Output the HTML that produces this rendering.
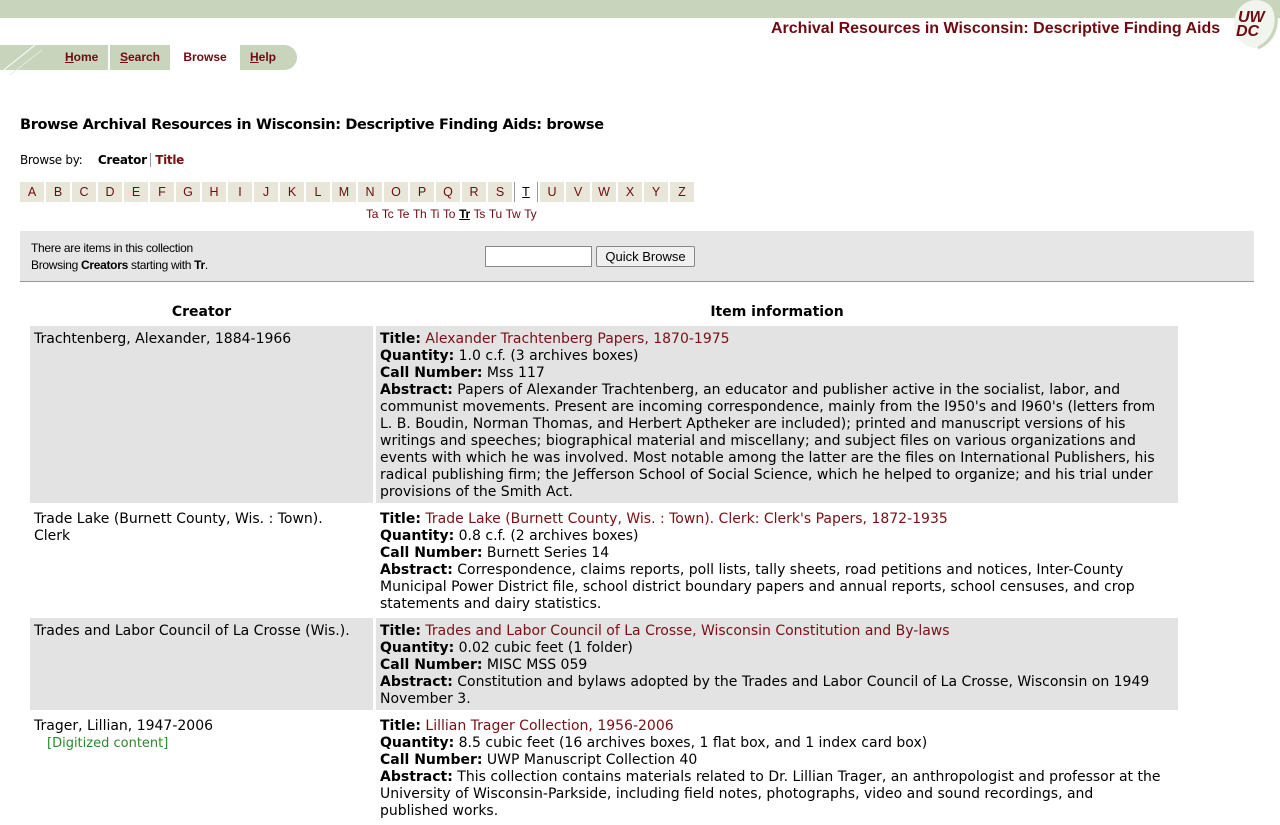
<!DOCTYPE html>
<html><head><meta charset="utf-8"><style>
body{margin:0;background:#fff;font-family:"DejaVu Sans",Verdana,sans-serif;color:#000;width:1280px;height:800px;overflow:hidden;position:relative}
a{color:#7a0f14;text-decoration:none}
.band{position:absolute;left:0;top:0;width:1280px;height:18px;background:#c8d4bc}
.sitetitle{position:absolute;left:771px;top:20px;font:bold 16px "Liberation Sans",Arial,sans-serif;color:#6e0a10}
.logo{position:absolute;left:1226px;top:0px;width:54px;height:50px}
.tabs{position:absolute;left:0;top:45px;height:25px;font:bold 12px "Liberation Sans",Arial,sans-serif}
.tab{position:absolute;top:0;height:25px;line-height:24px;background:#c8d4bc;color:#6e0a10;text-align:center}
.tab u{text-decoration:underline}
h1{position:absolute;left:20px;top:117px;margin:0;font:bold 14.5px "DejaVu Sans",sans-serif;letter-spacing:-0.35px}
.by{position:absolute;left:20px;top:153px;font-size:12px;letter-spacing:-0.3px}
.by b{margin-left:12px}
.letters{position:absolute;left:20px;top:182px;height:20px}
.letters span{position:absolute;top:0;width:24px;height:17px;padding-top:3px;line-height:17px;text-align:center;background:#e8e6d8;color:#6e0a10;font:12.5px "Liberation Sans",Arial,sans-serif}
.letters span.cur{background:#fff;border-left:1px solid #999;border-right:1px solid #999;color:#000;text-decoration:underline;width:22px}
.sub{position:absolute;left:366px;top:207px;font:12px "Liberation Sans",Arial,sans-serif;color:#6e0a10;letter-spacing:-0.3px;word-spacing:1px}
.box{position:absolute;left:20px;top:231px;width:1234px;height:50px;background:#e6e6e6;border-bottom:1px solid #999}
.box .t{position:absolute;left:11px;top:9px;font:12px/17px "Liberation Sans",Arial,sans-serif;letter-spacing:-0.3px}
.box input{position:absolute;left:465px;top:15px;width:105px;height:19px;border:1px solid #888;background:#fff;padding:0}
.box button{position:absolute;left:576px;top:15px;height:21px;width:99px;border:1px solid #888;background:#f0f0f0;border-radius:2px;font:13px "Liberation Sans",Arial,sans-serif;padding:0}
table{position:absolute;left:27px;top:301px;border-spacing:3px;font-size:14px;line-height:17px;width:1154px}
th{font-weight:bold;height:19px;padding:0;vertical-align:top;font-size:14px}
td{vertical-align:top;padding:5px 14px 2px 4px}
tr.g td{background:#e3e3e3}
td.c{width:325px}
.dig{color:#2a8a2a;margin-left:13px;font-size:13px}
</style></head><body>
<div class="band"></div>
<div class="sitetitle">Archival Resources in Wisconsin: Descriptive Finding Aids</div>
<svg class="logo" viewBox="0 0 54 50"><ellipse cx="30" cy="24" rx="22" ry="24" fill="#f2f5ee"/><path d="M44 3 C56 16 50 40 32 48" stroke="#c8d4bc" stroke-width="3" fill="none"/><text x="12" y="22" font-family="Liberation Sans" font-style="italic" font-weight="bold" font-size="16" fill="#6e0a10">UW</text><text x="10" y="36" font-family="Liberation Sans" font-style="italic" font-weight="bold" font-size="16" fill="#6e0a10">DC</text></svg>
<div class="tabs">
<div class="tab" style="left:0;width:108px;"><svg style="position:absolute;left:0;top:0" width="45" height="30"><line x1="0" y1="28" x2="35" y2="0" stroke="#fff" stroke-width="1"/><line x1="10" y1="30" x2="42" y2="5" stroke="#e6ebe0" stroke-width="1"/></svg><span style="position:absolute;left:65px"><u>H</u>ome</span></div>
<div class="tab" style="left:110px;width:60px"><u>S</u>earch</div>
<div class="tab" style="left:170px;width:70px;background:#fff">Browse</div>
<div class="tab" style="left:240px;width:57px;border-radius:0 13px 13px 0;text-align:left"><span style="padding-left:10px"><u>H</u>elp</span></div>
</div>
<h1>Browse Archival Resources in Wisconsin: Descriptive Finding Aids: browse</h1>
<div class="by">Browse by: <b>Creator</b> <span style="border-left:1px solid #999;padding-left:4px"><a href="#"><b style="margin:0">Title</b></a></span></div>
<div class="letters">
<span style="left:0">A</span><span style="left:26px">B</span><span style="left:52px">C</span><span style="left:78px">D</span><span style="left:104px">E</span><span style="left:130px">F</span><span style="left:156px">G</span><span style="left:182px">H</span><span style="left:208px">I</span><span style="left:234px">J</span><span style="left:260px">K</span><span style="left:286px">L</span><span style="left:312px">M</span><span style="left:338px">N</span><span style="left:364px">O</span><span style="left:390px">P</span><span style="left:416px">Q</span><span style="left:442px">R</span><span style="left:468px">S</span><span class="cur" style="left:494px">T</span><span style="left:520px">U</span><span style="left:546px">V</span><span style="left:572px">W</span><span style="left:598px">X</span><span style="left:624px">Y</span><span style="left:650px">Z</span>
</div>
<div class="sub">Ta Tc Te Th Ti To <span style="color:#000;text-decoration:underline;font-weight:bold">Tr</span> Ts Tu Tw Ty</div>
<div class="box"><div class="t">There are items in this collection<br>Browsing <b>Creators</b> starting with <b>Tr</b>.</div><input type="text"><button>Quick Browse</button></div>
<table>
<tr><th>Creator</th><th>Item information</th></tr>
<tr class="g"><td class="c">Trachtenberg, Alexander, 1884-1966</td><td><b>Title:</b> <a href="#">Alexander Trachtenberg Papers, 1870-1975</a><br><b>Quantity:</b> 1.0 c.f. (3 archives boxes)<br><b>Call Number:</b> Mss 117<br><b>Abstract:</b> Papers of Alexander Trachtenberg, an educator and publisher active in the socialist, labor, and communist movements. Present are incoming correspondence, mainly from the l950's and l960's (letters from L. B. Boudin, Norman Thomas, and Herbert Aptheker are included); printed and manuscript versions of his writings and speeches; biographical material and miscellany; and subject files on various organizations and events with which he was involved. Most notable among the latter are the files on International Publishers, his radical publishing firm; the Jefferson School of Social Science, which he helped to organize; and his trial under provisions of the Smith Act.</td></tr>
<tr><td class="c">Trade Lake (Burnett County, Wis. : Town). Clerk</td><td><b>Title:</b> <a href="#">Trade Lake (Burnett County, Wis. : Town). Clerk: Clerk's Papers, 1872-1935</a><br><b>Quantity:</b> 0.8 c.f. (2 archives boxes)<br><b>Call Number:</b> Burnett Series 14<br><b>Abstract:</b> Correspondence, claims reports, poll lists, tally sheets, road petitions and notices, Inter-County Municipal Power District file, school district boundary papers and annual reports, school censuses, and crop statements and dairy statistics.</td></tr>
<tr class="g"><td class="c">Trades and Labor Council of La Crosse (Wis.).</td><td><b>Title:</b> <a href="#">Trades and Labor Council of La Crosse, Wisconsin Constitution and By-laws</a><br><b>Quantity:</b> 0.02 cubic feet (1 folder)<br><b>Call Number:</b> MISC MSS 059<br><b>Abstract:</b> Constitution and bylaws adopted by the Trades and Labor Council of La Crosse, Wisconsin on 1949 November 3.</td></tr>
<tr><td class="c">Trager, Lillian, 1947-2006<br><span class="dig">[Digitized content]</span></td><td><b>Title:</b> <a href="#">Lillian Trager Collection, 1956-2006</a><br><b>Quantity:</b> 8.5 cubic feet (16 archives boxes, 1 flat box, and 1 index card box)<br><b>Call Number:</b> UWP Manuscript Collection 40<br><b>Abstract:</b> This collection contains materials related to Dr. Lillian Trager, an anthropologist and professor at the University of Wisconsin-Parkside, including field notes, photographs, video and sound recordings, and published works.</td></tr>
</table>
</body></html>
